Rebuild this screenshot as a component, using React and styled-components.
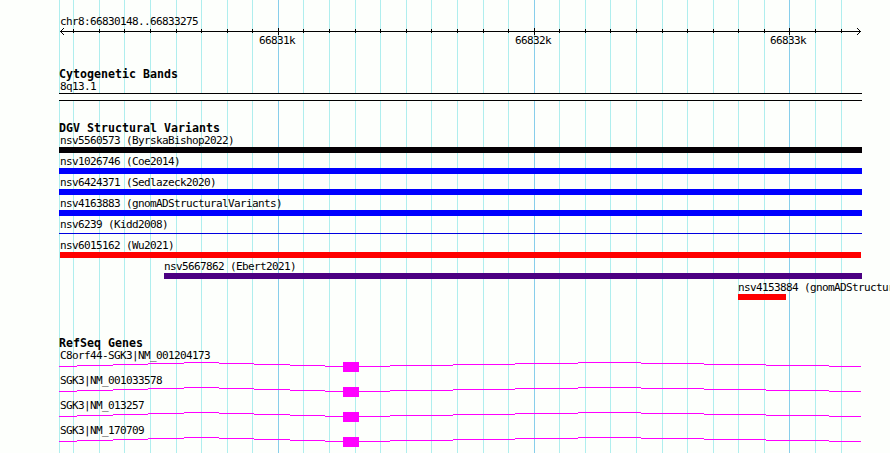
import styled, { createGlobalStyle } from 'styled-components'

const GRID = [
  59, 73, 99, 124, 150, 176, 201, 227, 252, 278, 303, 329, 355, 380, 406, 431,
  457, 483, 508, 534, 559, 585, 610, 636, 662, 687, 713, 738, 764, 789, 815,
  841,
]

const MAJOR = [
  { x: 278, label: '66831k' },
  { x: 534, label: '66832k' },
  { x: 789, label: '66833k' },
]

const VARIANTS = [
  { name: 'nsv5560573 (ByrskaBishop2022)', color: '#040004' },
  { name: 'nsv1026746 (Coe2014)', color: '#0000ff' },
  { name: 'nsv6424371 (Sedlazeck2020)', color: '#0000ff' },
  { name: 'nsv4163883 (gnomADStructuralVariants)', color: '#0000ff' },
  { name: 'nsv6239 (Kidd2008)', color: '#0000e0', thin: true },
  { name: 'nsv6015162 (Wu2021)', color: '#ff0000', inset: 1, width: 801 },
  { name: 'nsv5667862 (Ebert2021)', color: '#4b0082', start: 105, width: 698 },
  {
    name: 'nsv4153884 (gnomADStructuralVariants)',
    color: '#ff0000',
    start: 679,
    width: 48,
  },
]

const GENES = [
  'C8orf44-SGK3|NM_001204173',
  'SGK3|NM_001033578',
  'SGK3|NM_013257',
  'SGK3|NM_170709',
]

// [start, end, row] for each flat step of the intron line
const INTRON_STEPS = [
  [59, 77, 4],
  [77, 113, 3],
  [113, 148, 2],
  [148, 184, 1],
  [184, 219, 0],
  [219, 254, 1],
  [254, 290, 2],
  [290, 325, 3],
  [325, 343, 4],
  [359, 390, 4],
  [390, 453, 3],
  [453, 515, 2],
  [515, 578, 1],
  [578, 641, 0],
  [641, 704, 1],
  [704, 766, 2],
  [766, 829, 3],
  [829, 861, 4],
]

const isMajor = (x) => MAJOR.some((m) => m.x === x)

const GlobalStyle = createGlobalStyle`
  body {
    margin: 0;
    background: #fdfffc;
    overflow: hidden;
  }
`

const Browser = styled.main`
  display: grid;
  width: 890px;
  height: 453px;
  overflow: hidden;
  color: #000;
  background: #fdfffc;
  font: 11px/13px 'DejaVu Sans Mono', monospace;
  letter-spacing: -0.62px;

  > * {
    grid-area: 1 / 1;
    min-width: 0;
  }
`

const Drawing = styled.svg`
  display: block;
  width: 890px;
  height: ${({ $height }) => $height}px;
  margin-left: ${({ $bleed }) => ($bleed ? -59 : 0)}px;
  overflow: visible;
  shape-rendering: crispEdges;
`

const Tracks = styled.div`
  display: flex;
  flex-direction: column;
  padding: 15px 0 0 59px;
`

const Track = styled.section`
  display: flex;
  flex-direction: column;
  margin-bottom: ${({ $after }) => $after}px;
`

const Heading = styled.h2`
  height: 12px;
  margin: 0;
  font-size: 11.6px;
  line-height: 13px;
  font-weight: 700;
  letter-spacing: 0.02px;
  white-space: pre;
`

const Label = styled.div`
  height: 13px;
  padding-left: 1px;
  white-space: pre;
`

const Band = styled.div`
  box-sizing: border-box;
  width: 803px;
  height: 8px;
  border: solid #000;
  border-width: 1px 0;
  background: #fdfffc;
`

const Feature = styled.div`
  height: 21px;
  padding-left: ${({ $start = 0 }) => $start}px;

  ${Label} {
    padding-left: ${({ $start }) => ($start ? 0 : 1)}px;
  }
`

const Bar = styled.div`
  width: ${({ $width = 803 }) => $width}px;
  height: ${({ $thin }) => ($thin ? 1 : 6)}px;
  margin: ${({ $thin }) => ($thin ? 2 : 0)}px 0 0
    ${({ $inset = 0 }) => $inset}px;
  background: ${({ $color }) => $color};
`

const Gene = styled.div`
  height: 25px;
`

const GridLines = () => (
  <Drawing $height={453}>
    {GRID.map((x) => (
      <rect
        key={x}
        x={x}
        width="1"
        height="453"
        fill={isMajor(x) ? '#87ceeb' : '#afeeee'}
      />
    ))}
  </Drawing>
)

const Ruler = () => (
  <Drawing $height={20} $bleed>
    <rect x="60" y="3" width="801" height="1" />
    {[1, 2, 3].map((step) => (
      <g key={step}>
        <rect x={60 + step} y={3 - step} width="1" height="1" />
        <rect x={60 + step} y={3 + step} width="1" height="1" />
        <rect x={860 - step} y={3 - step} width="1" height="1" />
        <rect x={860 - step} y={3 + step} width="1" height="1" />
      </g>
    ))}
    {GRID.slice(1).map((x) => (
      <rect
        key={x}
        x={x}
        y={isMajor(x) ? 0 : 1}
        width="1"
        height={isMajor(x) ? 7 : 4}
      />
    ))}
    {MAJOR.map(({ x, label }) => (
      <text key={label} x={x - 19} y="16">
        {label}
      </text>
    ))}
  </Drawing>
)

const Transcript = () => (
  <Drawing $height={10} $bleed fill="#ff00ff">
    {INTRON_STEPS.map(([start, end, row]) => (
      <rect key={start} x={start} y={row} width={end - start} height="1" />
    ))}
    <rect x="343" y="0" width="16" height="10" />
  </Drawing>
)

export default function App() {
  return (
    <>
      <GlobalStyle />
      <Browser>
        <GridLines />
        <Tracks>
          <Track $after={20}>
            <Label>chr8:66830148..66833275</Label>
            <Ruler />
          </Track>
          <Track $after={21}>
            <Heading>Cytogenetic Bands</Heading>
            <Label>8q13.1</Label>
            <Band />
          </Track>
          <Track $after={35}>
            <Heading>DGV Structural Variants</Heading>
            {VARIANTS.map(({ name, color, thin, inset, start, width }) => (
              <Feature key={name} $start={start}>
                <Label>{name}</Label>
                <Bar
                  $color={color}
                  $thin={thin}
                  $inset={inset}
                  $width={width}
                />
              </Feature>
            ))}
          </Track>
          <Track $after={0}>
            <Heading>RefSeq Genes</Heading>
            {GENES.map((name) => (
              <Gene key={name}>
                <Label>{name}</Label>
                <Transcript />
              </Gene>
            ))}
          </Track>
        </Tracks>
      </Browser>
    </>
  )
}
